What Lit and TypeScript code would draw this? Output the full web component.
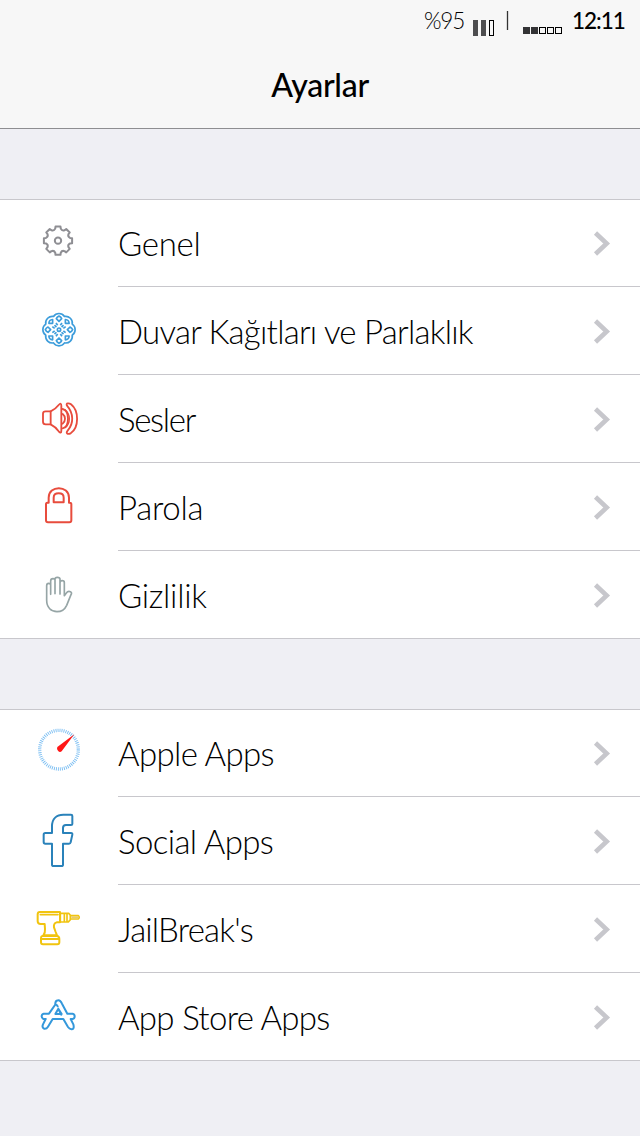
import { LitElement, html, svg, css, TemplateResult } from "lit";
import { customElement } from "lit/decorators.js";

interface Row {
  label: string;
  spacing: number;
  // vertical origin of the glyph inside its row; glyphs are drawn on a 3x grid
  top: number;
  icon: TemplateResult;
}

const polar = (cx: number, cy: number, r: number, deg: number) => {
  const a = (deg * Math.PI) / 180;
  return `${(cx + r * Math.sin(a)).toFixed(1)} ${(cy - r * Math.cos(a)).toFixed(1)}`;
};

const gearPath = () => {
  const p = (r: number, d: number) => polar(84, 77, r, d);
  let d = "";
  for (let k = 0; k < 8; k++) {
    const a = k * 45;
    d += `${k ? "L" : "M"}${p(37, a - 13)} L${p(43, a - 10)} L${p(43, a + 10)} L${p(37, a + 13)} Q${p(31, a + 22.5)} ${p(37, a + 32)} `;
  }
  return d + "Z";
};

const scallop = () => {
  let d = `M${polar(87, 89, 43, -22.5)}`;
  for (let k = 0; k < 8; k++) d += ` A20 20 0 0 1 ${polar(87, 89, 43, k * 45 + 22.5)}`;
  return d + "Z";
};

const eight = [0, 1, 2, 3, 4, 5, 6, 7];

const gear = svg`<g fill="none" stroke="#8e8e93" stroke-width="6" stroke-linejoin="round">
  <path d=${gearPath()} /><circle cx="84" cy="77" r="9.5" /></g>`;

const flower = svg`<g fill="none" stroke="#3d9ddb" stroke-width="5" stroke-linejoin="round">
  <path d=${scallop()} />
  <circle cx="87" cy="89" r="5" />
  ${eight.map((k) => k % 2
    ? svg`<path transform="rotate(${k * 45} 87 89)" d="M87 62 L79 54 Q87 47 95 54Z M87 78V70" />`
    : svg`<path transform="rotate(${k * 45} 87 89)" d="M87 64 L79 56 Q81 51 87 48 Q93 51 95 56Z M83 76 L78 69 M91 76 L96 69" />`)}
</g>`;

const speaker = svg`<g fill="none" stroke="#e84c3d" stroke-width="5.5" stroke-linejoin="round" stroke-linecap="round">
  <path d="M62 64 H47 Q39 64 39 71 V95 Q39 103 47 103 H62" />
  <path d="M62 64 Q77 57 86 45 Q94 36 94 48 V122 Q94 133 86 124 Q76 110 62 103 Z" />
  <path d="M98 57 C111 60 114 73 114 86 C114 100 110 112 98 115" />
  <path d="M98 72 Q105 78 105 86 Q105 95 98 101" />
  <path d="M105 59 Q118 69 118 86 Q118 104 105 113" stroke-width="4" />
  <path d="M111 47 C106 38 118 39 123 43 C147 62 148 112 122 130 C113 134 106 130 113 122 C132 100 131 70 111 47Z" />
</g>`;

const lock = svg`<g fill="none" stroke="#e84c3d" stroke-width="6" stroke-linejoin="round">
  <path d="M56 83 V68 C56 30 117 30 117 68 V83 H120 Q124 83 124 88 V136 Q124 142 118 142 H54 Q48 142 48 136 V88 Q48 83 52 83Z" />
  <path d="M71 82 V68 Q71 55 86 55 Q101 55 101 68 V82Z" /></g>`;

const hand = svg`<path fill="none" stroke="#96a5a6" stroke-width="5" stroke-linejoin="round" stroke-linecap="round"
  d="M62 88 V61 Q62 55 56 55 Q50 55 50 62 V106 C50 128 64 140 81 140 C95 140 105 132 110 121 L123 89 Q127 83 121 80 Q114 77 109 84 L103 92 V53 Q103 47 97 47 Q90 47 90 53 M75 85 V45 Q75 41 69 41 Q62 41 62 48 V88 M90 85 V43 Q90 37 82 37 Q75 37 75 43 V86 M90 50 V87" />`;

const compass = svg`<circle cx="87" cy="89" r="58" fill="none" stroke="#79bdf2" stroke-width="10" stroke-dasharray="2.7 3.374" />
  <path d="M133 43 L95 94 Q89 99 84 92 Q79 88 82 81Z" fill="#ff1717" />`;

const facebook = svg`<path fill="none" stroke="#2a82ba" stroke-width="6" stroke-linejoin="round"
  d="M66 69 V49 C66 26 80 14 100 14 H123 Q127 14 127 18 V42 Q127 45 123 45 H108 Q99 45 99 54 V69 H123 Q128 69 127 74 L122 97 Q121 101 117 101 H99 V164 Q99 168 94 168 H71 Q66 168 66 164 V101 H46 Q41 101 41 96 V74 Q41 69 46 69Z" />`;

const drill = svg`<g fill="none" stroke="#f1c40f" stroke-width="6" stroke-linejoin="round" stroke-linecap="round">
  <path d="M30 36 H90 V67 H80 Q70 70 72 82 L77 96 L81 106 H40 Q46 99 45 87 L44 72 H32 Q23 72 23 64 V43 Q23 36 30 36Z" />
  <path d="M31 44 H84" stroke-width="5" />
  <path d="M37 108 H82 Q88 110 88 117 V127 Q88 133 82 133 H39 Q33 133 33 127 V114Q33 109 37 108Z M34 117 H87" />
  <path d="M91 40 H116 L121 46 V59 L115 66 H91Z M103 41 V65 M111 41 V65" stroke-width="5" />
  <path d="M122 47 H145 Q150 52 145 57 H122" stroke-width="5" /></g>
  <path d="M124 52 H146" stroke="#e9cb67" stroke-width="6" />`;

const store = svg`<g fill="none" stroke="#3498db" stroke-width="6" stroke-linejoin="round" stroke-linecap="round">
  <path d="M76 44 Q75 32 84 31 Q91 30 96 41 L112 71 H128 Q134 72 134 79 Q134 86 128 87 H122 L130 103 Q134 118 124 118 Q118 117 114 111 L100 87 H68 L54 110 Q49 118 42 116 Q35 113 39 103 L47 87 H40 Q35 85 35 79 Q35 72 41 71 H57 L75 45 Q80 42 83 49" />
  <path d="M85 56 L76 72 H95Z M85 57 L94 74" /></g>`;

const groups: Row[][] = [
  [
    { label: "Genel", spacing: -0.3, top: 16, icon: gear },
    { label: "Duvar Kağıtları ve Parlaklık", spacing: -0.74, top: 13, icon: flower },
    { label: "Sesler", spacing: -1.3, top: 15, icon: speaker },
    { label: "Parola", spacing: -0.3, top: 12, icon: lock },
    { label: "Gizlilik", spacing: -0.3, top: 14, icon: hand },
  ],
  [
    { label: "Apple Apps", spacing: -0.62, top: 11, icon: compass },
    { label: "Social Apps", spacing: -0.6, top: 13, icon: facebook },
    { label: "JailBreak's", spacing: -0.8, top: 15, icon: drill },
    { label: "App Store Apps", spacing: -0.68, top: 17, icon: store },
  ],
];

@customElement("app-root")
export class AppRoot extends LitElement {
  static styles = css`
    :host { display: block; box-sizing: border-box; height: 1136px; overflow: hidden; background: #efeff4;
      color: #000; font-family: Lato, "Open Sans", sans-serif; font-weight: 300; }
    header { box-sizing: border-box; height: 129px; background: #f7f7f7; border-bottom: 1px solid #8e8e91; }
    .status { display: flex; height: 42px; padding: 0 14px 0 424px; }
    .percent { width: 49px; font-size: 22.5px; line-height: 42px; letter-spacing: -1.2px; }
    .meters { display: block; width: 99px; height: 42px; flex: none; }
    .time { font-size: 22.5px; line-height: 42px; font-weight: 500; letter-spacing: -1px; white-space: nowrap; }
    h1 { margin: 0; height: 86px; line-height: 85px; text-align: center; font-size: 32px; font-weight: 500; letter-spacing: -0.3px; }
    .group { margin: 70px 0; background: #fff; border-bottom: 1px solid #c8c7cc; box-shadow: inset 0 1px #c8c7cc; }
    .row { display: flex; height: 88px; }
    .row:last-child { height: 87px; }
    .icon { display: block; width: 118px; height: 87px; flex: none; overflow: visible; }
    .body { flex: 1; display: flex; justify-content: space-between; box-sizing: border-box; border-bottom: 1px solid #c8c7cc; }
    .row:last-child .body { border-bottom: 0; }
    .label { font-size: 33px; line-height: 88px; height: 87px; white-space: nowrap; }
    .chevron { display: block; width: 60px; height: 87px; flex: none; }
  `;

  render() {
    return html`
      <header>
        <div class="status">
          <span class="percent">%95</span>
          <svg class="meters" viewBox="473 0 99 42">
            <path d="M473 20h5v16h-5z M481 20h5v16h-5z" fill="#4d4d4f" />
            <rect x="489.5" y="20.5" width="4" height="15" fill="none" stroke="#000" />
            <path d="M507.5 11V30" stroke="#333" stroke-width="1.3" />
            <path d="M523 27h7v7h-7z M531 27h7v7h-7z" fill="#333335" />
            ${[539.5, 547.5, 555.5].map((x) => svg`<rect x=${x} y="27.5" width="6" height="6" fill="none" stroke="#000" />`)}
          </svg>
          <span class="time">12:11</span>
        </div>
        <h1>Ayarlar</h1>
      </header>
      ${groups.map((rows) => html`<section class="group">
        ${rows.map((r) => html`<div class="row">
          <svg class="icon" viewBox="0 0 118 87"><g transform="translate(30 ${r.top}) scale(.33333)">${r.icon}</g></svg>
          <div class="body">
            <span class="label" style="letter-spacing:${r.spacing}px">${r.label}</span>
            <svg class="chevron" viewBox="580 0 60 87"><path d="M595.5 34 L606.7 44.5 L595.5 55" fill="none" stroke="#c7c7cc" stroke-width="4.6" /></svg>
          </div>
        </div>`)}
      </section>`)}
    `;
  }
}
